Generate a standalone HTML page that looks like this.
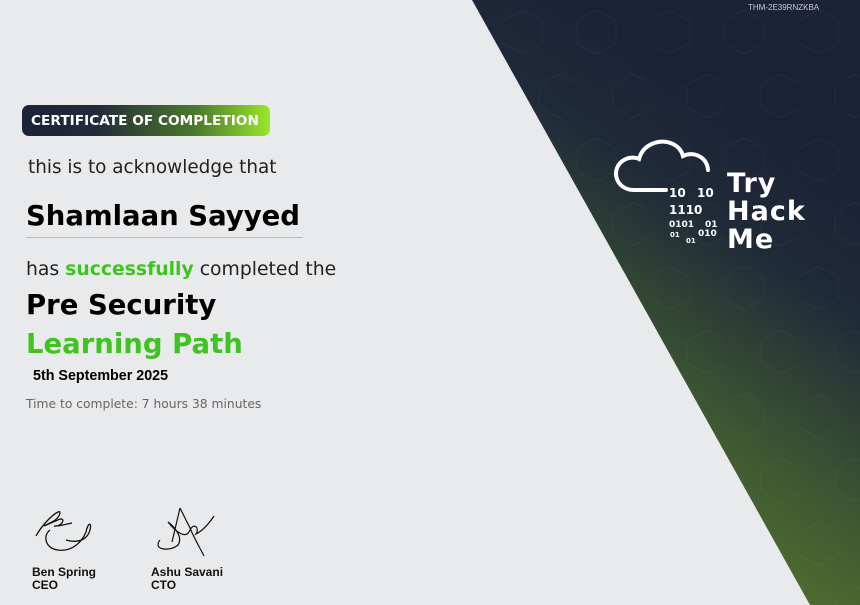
<!DOCTYPE html>
<html><head><meta charset="utf-8"><style>
*{margin:0;padding:0;box-sizing:border-box}
body{width:860px;height:605px;overflow:hidden;background:#e9eaec;font-family:"DejaVu Sans","Liberation Sans",sans-serif;position:relative}
.t{position:absolute;white-space:nowrap}
.badge{left:22px;top:105px;width:248px;height:31px;border-radius:7px;background:linear-gradient(90deg,#1c2238 0%,#232a3a 30%,#4a7a2c 70%,#9ae62a 100%);color:#fff;font-weight:bold;font-size:13.7px;line-height:33px;padding-left:9px}
.sig{font-family:"Liberation Sans",sans-serif;font-weight:bold;font-size:12px;line-height:13px;color:#111}
</style></head><body>
<svg width="860" height="605" style="position:absolute;left:0;top:0">
<defs>
<linearGradient id="g" x1="600" y1="560" x2="860" y2="180" gradientUnits="userSpaceOnUse">
<stop offset="0" stop-color="#5a7c2e"/><stop offset="0.4" stop-color="#3d5632"/><stop offset="0.75" stop-color="#1f2a38"/><stop offset="1" stop-color="#1c2238"/>
</linearGradient>
<pattern id="hx" width="74" height="128" patternUnits="userSpaceOnUse" x="650" y="10">
<path d="M20 0 L40 11 L40 33 L20 44 L0 33 L0 11Z M57 64 L77 75 L77 97 L57 108 L37 97 L37 75Z" fill="none" stroke="#ffffff" stroke-opacity="0.03" stroke-width="1"/>
</pattern>
</defs>
<polygon points="472,0 860,0 860,605 810,605" fill="url(#g)"/>
<polygon points="472,0 860,0 860,605 810,605" fill="url(#hx)"/>
<path d="M666 190 L634 190 C615 190 610 168 624 160 C629 157 635 157 639 159 C643 144 660 138 673 144 C679 147 682 152 683 156 C694 151 707 157 708 170" fill="none" stroke="#fff" stroke-width="4" stroke-linecap="round"/>
<g fill="#fff" font-family="DejaVu Sans,sans-serif" font-weight="bold">
<text x="669" y="197" font-size="12">10</text><text x="697" y="197" font-size="12">10</text>
<text x="669" y="214" font-size="12">1110</text>
<text x="669" y="227" font-size="9">0101</text><text x="705" y="227" font-size="9">01</text>
<text x="670" y="237" font-size="7">01</text><text x="698" y="236" font-size="9">010</text>
<text x="686" y="243" font-size="7">01</text>
</g>
<g fill="#fff" font-family="DejaVu Sans,sans-serif" font-size="27" font-weight="bold" letter-spacing="1">
<text x="727" y="192">Try</text><text x="727" y="220">Hack</text><text x="727" y="248">Me</text>
</g>
<text x="748" y="10" font-size="8" fill="#c9ccd4" font-family="Liberation Sans,sans-serif">THM-2E39RNZKBA</text>
<path d="M36 536 C42 525 52 515 58 512 C62 510 60 518 52 522 L44 526 L60 519 C66 518 62 527 54 526 M50 530 C42 536 46 549 58 550 C72 552 82 542 86 532 C88 522 92 522 90 530 C88 538 80 544 66 540 M58 526 L72 523" fill="none" stroke="#111" stroke-width="1.3"/>
<path d="M180 508 L172 542 M180 508 L190 528 C195 540 200 548 204 556 M160 540 C152 550 170 552 178 545 C184 536 172 525 168 522 C176 532 186 540 190 530 C194 522 200 528 196 534 C204 530 210 522 214 516" fill="none" stroke="#111" stroke-width="1.2"/>
</svg>
<div class="t badge">CERTIFICATE OF COMPLETION</div>
<div class="t" style="left:28px;top:157px;font-size:18.4px;color:#222">this is to acknowledge that</div>
<div class="t" style="left:26px;top:200px;font-size:27.5px;font-weight:bold;color:#000">Shamlaan Sayyed</div>
<div class="t" style="left:26px;top:237px;width:277px;border-top:1px solid #bbb"></div>
<div class="t" style="left:26px;top:259px;font-size:18.8px;color:#222">has <b style="color:#3ec41e">successfully</b> completed the</div>
<div class="t" style="left:26px;top:289px;font-size:27.5px;font-weight:bold;color:#000">Pre Security</div>
<div class="t" style="left:26px;top:328px;font-size:27.5px;font-weight:bold;color:#3ec41e">Learning Path</div>
<div class="t" style="left:33px;top:368px;font-size:14.3px;font-weight:bold;color:#000;font-family:'Liberation Sans',sans-serif">5th September 2025</div>
<div class="t" style="left:26px;top:397px;font-size:12.3px;color:#666">Time to complete: 7 hours 38 minutes</div>
<div class="t sig" style="left:32px;top:566px">Ben Spring<br>CEO</div>
<div class="t sig" style="left:151px;top:566px">Ashu Savani<br>CTO</div>
</body></html>
